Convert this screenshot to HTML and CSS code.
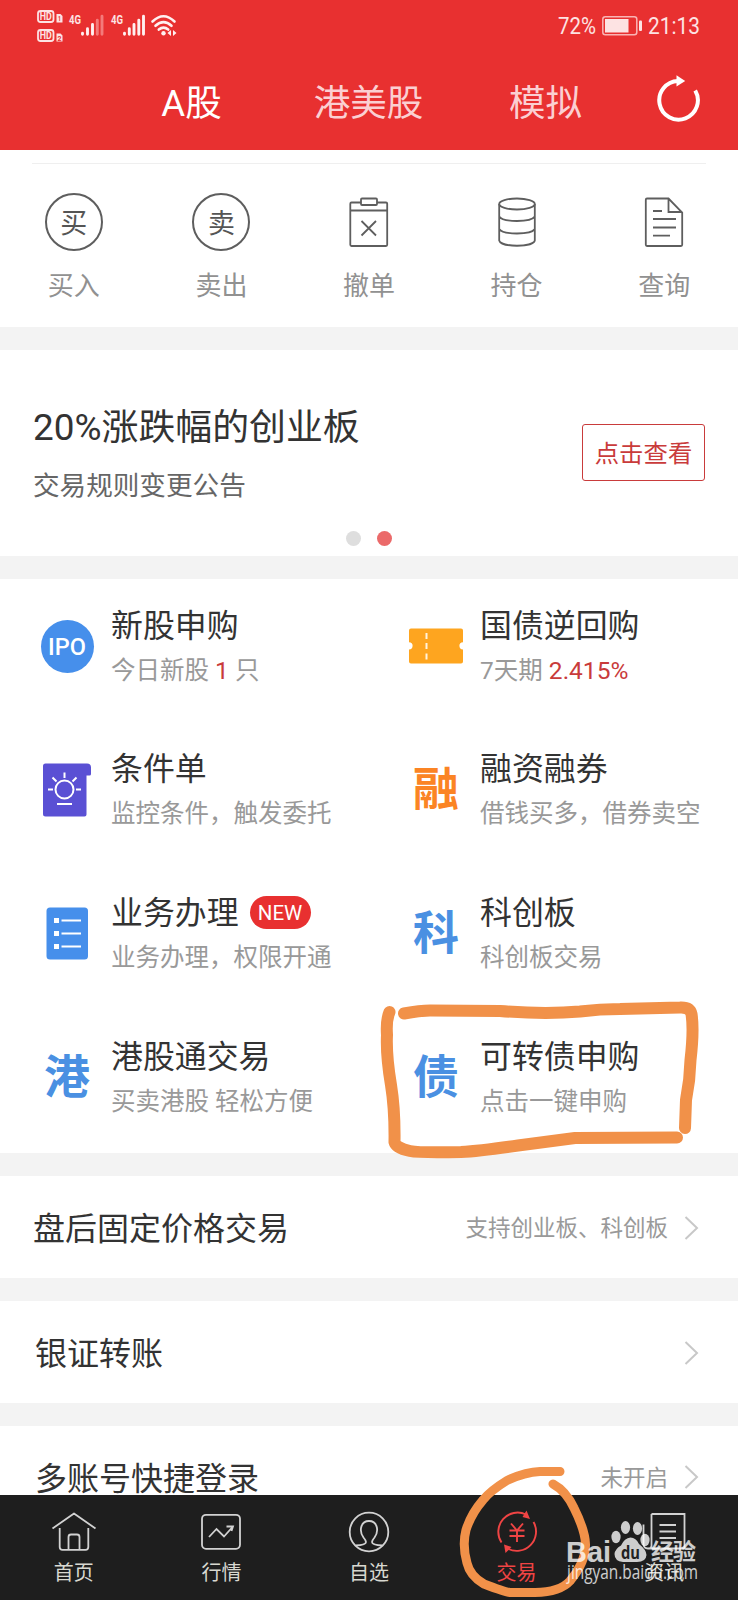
FILE: index.html
```html
<!DOCTYPE html>
<html lang="zh-CN">
<head>
<meta charset="utf-8">
<title>交易</title>
<link rel="stylesheet" href="styles.css">
</head>
<body>
<div class="screen">
  <header class="header">
    <div class="status">
      <svg class="status-left" width="146" height="44" viewBox="34 4 146 44">
        <g fill="none" stroke="#fde3e3" stroke-width="1.8">
          <rect x="38" y="11" width="15.500" height="11" rx="2.500"/>
          <rect x="38" y="30" width="15.500" height="11" rx="2.500"/>
        </g>
        <path d="M56.500 14h4l2 2v6.500h-6zM56.500 33.500h4l2 2v6h-6z" fill="#fde3e3"/>
        <g class="latin" fill="#fde3e3" font-weight="700">
          <text x="39.800" y="20.200" font-size="10.500" textLength="12" lengthAdjust="spacingAndGlyphs">HD</text>
          <text x="39.800" y="39.200" font-size="10.500" textLength="12" lengthAdjust="spacingAndGlyphs">HD</text>
          <text x="58" y="21.300" font-size="7.500" fill="#e83030" textLength="3" lengthAdjust="spacingAndGlyphs">1</text>
          <text x="57.500" y="40.600" font-size="7.500" fill="#e83030" textLength="4" lengthAdjust="spacingAndGlyphs">2</text>
          <text x="69" y="24.300" font-size="13.500" textLength="12" lengthAdjust="spacingAndGlyphs">4G</text>
          <text x="111" y="24.300" font-size="13.500" textLength="12" lengthAdjust="spacingAndGlyphs">4G</text>
        </g>
        <g fill="none" stroke="#fff0f0" stroke-width="2.900" stroke-linecap="round">
          <path d="M82.500 33.300v.9M87.500 28.800v5.400M92.500 24.500v9.700"/>
          <path d="M97.300 20.300v13.900M102 16.200v18" stroke="#f47a7a"/>
          <path d="M124.500 33.300v.9M129.300 28.800v5.400M134 24.500v9.700M138.800 20.300v13.900M143.500 16.200v18"/>
        </g>
        <g fill="none" stroke="#fff0f0" stroke-width="2.600" stroke-linecap="round">
          <path d="M152.500 21.500q11-10.500 22 0M155.500 25.800q8-7.500 16 0M158.800 29.600q4.700-4 9.400 0"/>
        </g>
        <circle cx="163.500" cy="33.200" r="2.200" fill="#fff0f0"/>
        <path d="M171 30v6l-3.500-3zM173 30v6l3.500-3z" fill="#fff0f0"/>
      </svg>
      <svg class="status-right" width="146" height="30" viewBox="556 12 146 30">
        <g class="latin" fill="#fde3e3" font-size="24">
          <text x="558" y="34.300" textLength="38" lengthAdjust="spacingAndGlyphs">72%</text>
          <text x="648" y="34.300" textLength="52" lengthAdjust="spacingAndGlyphs">21:13</text>
        </g>
        <rect x="602.800" y="16.800" width="34" height="18" rx="2.500" fill="none" stroke="#f9b4b4" stroke-width="1.500"/>
        <rect x="605" y="19" width="23.500" height="13.500" fill="#fde3e3"/>
        <rect x="639" y="20.500" width="3" height="10.500" rx="1" fill="#fde3e3"/>
      </svg>
    </div>
    <nav class="tabs">
      <a class="tab tab-on">A股</a>
      <a class="tab">港美股</a>
      <a class="tab">模拟</a>
      <span class="refresh">
        <svg width="48" height="50" viewBox="0 0 48 50">
          <path d="M43.200 16.500A19.300 19.300 0 1 1 26 7" fill="none" stroke="#fff" stroke-width="4"/>
          <path d="M24.500 1.200L33.200 7L24.500 12.500z" fill="#fff"/>
        </svg>
      </span>
    </nav>
  </header>

  <section class="actions">
    <div class="action">
      <span class="ring">买</span><span class="action-name">买入</span>
    </div>
    <div class="action">
      <span class="ring">卖</span><span class="action-name">卖出</span>
    </div>
    <div class="action">
      <svg width="58" height="58" viewBox="0 0 58 58" fill="none" stroke="#5e5e5e" stroke-width="1.800">
        <path d="M21 9.500H11.500Q10.300 9.500 10.300 10.700V51.800Q10.300 53 11.500 53H46Q47.200 53 47.200 51.800V10.700Q47.200 9.500 46 9.500H37M10.300 17.500H47.200"/>
        <rect x="21" y="5.500" width="16" height="6.500" rx="1"/>
        <path d="M21.500 28L36 42.500M36 28L21.500 42.500"/>
      </svg>
      <span class="action-name">撤单</span>
    </div>
    <div class="action">
      <svg width="58" height="58" viewBox="0 0 58 58" fill="none" stroke="#5e5e5e" stroke-width="1.800">
        <ellipse cx="29" cy="11" rx="17.800" ry="5.500"/>
        <path d="M11.200 11V47.500C13 54.500 45 54.500 46.800 47.500V11M11.200 23.500C15 29.500 43 29.500 46.800 23.500M11.200 36C15 42 43 42 46.800 36"/>
      </svg>
      <span class="action-name">持仓</span>
    </div>
    <div class="action">
      <svg width="58" height="58" viewBox="0 0 58 58" fill="none" stroke="#5e5e5e" stroke-width="1.800">
        <path d="M33.500 5.500H12Q10.800 5.500 10.800 6.700V51.800Q10.800 53 12 53H46Q47.200 53 47.200 51.800V19.500zM33.500 5.500V19H47.200M18 18H27M18 26H41M18 34.500H41M18 42.700H35"/>
      </svg>
      <span class="action-name">查询</span>
    </div>
  </section>

  <section class="banner">
    <div class="banner-row">
      <div>
        <h2 class="banner-title">20%涨跌幅的创业板</h2>
        <p class="banner-sub">交易规则变更公告</p>
      </div>
      <button class="banner-btn">点击查看</button>
    </div>
    <div class="dots"><i class="dot"></i><i class="dot dot-on"></i></div>
  </section>

  <section class="menu">
    <div class="item">
      <div class="icon"><span class="ipo">IPO</span></div>
      <div><h3>新股申购</h3><p>今日新股 <b>1</b> 只</p></div>
    </div>
    <div class="item">
      <div class="icon">
        <svg width="54" height="54" viewBox="0 0 54 54">
          <path d="M2 9.500H52Q54 9.500 54 11.500V23.200A3.600 3.600 0 0 0 54 30.400V42.500Q54 44.500 52 44.500H2Q0 44.500 0 42.500V30.400A3.600 3.600 0 0 0 0 23.200V11.500Q0 9.500 2 9.500z" fill="#fea51f"/>
          <path d="M17.500 14v6M17.500 24v6M17.500 34.500v6" stroke="#fff4dd" stroke-width="2"/>
        </svg>
      </div>
      <div><h3>国债逆回购</h3><p>7天期 <b>2.415%</b></p></div>
    </div>
    <div class="item">
      <div class="icon">
        <svg width="54" height="54" viewBox="0 0 54 54">
          <path d="M5.500 .500H47Q51 .500 51 4.500V11Q51 12.500 49.500 12.500H46.500V51.500Q46.500 53.500 44.500 53.500H5.500Q3 53.500 3 51V3Q3 .500 5.500 .500z" fill="#5a50d4"/>
          <g fill="none" stroke="#fff" stroke-width="2">
            <circle cx="24.500" cy="26.500" r="9"/>
            <path d="M24.500 9.500V15M8 26.500H13M36 26.500H41M12.500 14.500L16.500 18.500M36.500 14.500L32.500 18.500M17 41H32"/>
          </g>
        </svg>
      </div>
      <div><h3>条件单</h3><p>监控条件，触发委托</p></div>
    </div>
    <div class="item">
      <div class="icon"><span class="glyph glyph-orange">融</span></div>
      <div><h3>融资融券</h3><p>借钱买多，借券卖空</p></div>
    </div>
    <div class="item">
      <div class="icon">
        <svg width="54" height="54" viewBox="0 0 54 54">
          <rect x="6.500" y="1.500" width="41.500" height="52" rx="3.500" fill="#468feb"/>
          <path d="M14 12h5v5h-5zM14 25h5v5h-5zM14 38h5v5h-5z" fill="#fff"/>
          <path d="M21.500 14.500h19.500M21.500 27.500h19.500M21.500 40.500h19.500" stroke="#fff" stroke-width="2"/>
        </svg>
      </div>
      <div><h3>业务办理<span class="new">NEW</span></h3><p>业务办理，权限开通</p></div>
    </div>
    <div class="item">
      <div class="icon"><span class="glyph">科</span></div>
      <div><h3>科创板</h3><p>科创板交易</p></div>
    </div>
    <div class="item">
      <div class="icon"><span class="glyph">港</span></div>
      <div><h3>港股通交易</h3><p>买卖港股 轻松方便</p></div>
    </div>
    <div class="item">
      <div class="icon"><span class="glyph">债</span></div>
      <div><h3>可转债申购</h3><p>点击一键申购</p></div>
    </div>
  </section>

  <section class="row">
    <span class="row-name row-name-first">盘后固定价格交易</span><span class="row-note">支持创业板、科创板</span>
    <svg width="16" height="26" viewBox="0 0 16 26"><path d="M2.500 2L14 13L2.500 24" fill="none" stroke="#c8c8c8" stroke-width="2"/></svg>
  </section>
  <section class="row">
    <span class="row-name">银证转账</span><span class="row-note"></span>
    <svg width="16" height="26" viewBox="0 0 16 26"><path d="M2.500 2L14 13L2.500 24" fill="none" stroke="#c8c8c8" stroke-width="2"/></svg>
  </section>
  <section class="row row-cut">
    <span class="row-name">多账号快捷登录</span><span class="row-note">未开启</span>
    <svg width="16" height="26" viewBox="0 0 16 26"><path d="M2.500 2L14 13L2.500 24" fill="none" stroke="#c8c8c8" stroke-width="2"/></svg>
  </section>

  <nav class="bottom">
    <a class="nav">
      <svg width="46" height="44" viewBox="0 0 46 44" fill="none" stroke="#d2d2d2" stroke-width="1.800" stroke-linejoin="round">
        <path d="M1.500 18.500L23 3.500L44.500 18.500M8.700 18V37Q8.700 39.800 11.500 39.800H34.500Q37.300 39.800 37.300 37V18M17.500 39.800V27Q17.500 24.500 20 24.500H26Q28.500 24.500 28.500 27V39.800"/>
      </svg><span>首页</span>
    </a>
    <a class="nav">
      <svg width="46" height="44" viewBox="0 0 46 44" fill="none" stroke="#d2d2d2" stroke-width="1.800">
        <rect x="4" y="4.800" width="38" height="34" rx="4"/>
        <path d="M11 27L18.500 19L26 26.500L34.500 17M28.500 16.500H35L33.500 21"/>
      </svg><span>行情</span>
    </a>
    <a class="nav">
      <svg width="46" height="44" viewBox="0 0 46 44" fill="none" stroke="#d2d2d2" stroke-width="1.800">
        <circle cx="23" cy="22" r="19.300"/>
        <path d="M9.500 35.500Q20 35 20 32Q20 30.500 17.500 27.500C12.500 20.500 15 11 23 11S33.500 20.500 28.500 27.500Q26 30.500 26 32Q26 35 36.500 35.500"/>
      </svg><span>自选</span>
    </a>
    <a class="nav nav-on">
      <svg width="46" height="44" viewBox="0 0 46 44" fill="none" stroke="#f04444" stroke-width="1.900">
        <path d="M7.500 32.500A19.300 19.300 0 0 1 32 4.500M39.500 12A19.300 19.300 0 0 1 13.500 38.500"/>
        <path d="M32.500 .500L36 9L28.500 7zM10 34.500L17.500 37L11.500 43z" fill="#f04444" stroke="none"/>
        <path d="M17 13.500L23 20.500L29 13.500M23 20.500V32M15.500 20.500H30.500M15.500 26H30.500"/>
      </svg><span>交易</span>
    </a>
    <a class="nav">
      <svg width="46" height="44" viewBox="0 0 46 44" fill="none" stroke="#d2d2d2" stroke-width="1.800">
        <path d="M10.500 4H43.500V38.500H7Q2.500 38.500 2.500 34V14.500M10.500 4V36Q10.500 38.500 7 38.500M18.500 15H35M18.500 21.500H35M18.500 28H35"/>
      </svg><span>资讯</span>
    </a>
  </nav>

  <svg class="overlay" width="738" height="1600" viewBox="0 0 738 1600">
    <g fill="none" stroke="#f19149" stroke-linecap="round" stroke-linejoin="round">
      <path stroke-width="12" d="M404 1013.500C412 1012 420 1010.500 430 1010.500L500 1011Q545 1014.500 580 1011.500Q600 1009 620 1009L680 1007.500Q690 1007 691.500 1014Q694 1030 690.500 1060Q690 1080 686 1100L685 1128"/>
      <path stroke-width="12" d="M389.500 1012Q386 1020 387 1035Q386 1055 391 1085Q395 1110 394.500 1142Q396 1148 410 1151Q420 1153 461 1152Q480 1151 518 1145.500Q560 1140 575 1138L677 1137.500"/>
      <path stroke-width="9" d="M560 1471.500H540Q525 1472 507 1480.500Q490 1491 483 1500Q471 1514 466 1530Q462 1545 467 1563Q470 1576 484 1584Q505 1592 510 1592.500H535Q560 1592 570 1581Q586 1562 585.500 1544Q585 1530 574 1508Q566 1491 553 1484"/>
    </g>
    <g fill="#fff" opacity=".78">
      <g class="mark">
        <text class="mark-name" x="566" y="1561.500" font-size="30" font-weight="700" textLength="45" lengthAdjust="spacingAndGlyphs">Bai</text>
        <text x="651" y="1560" font-size="23" font-weight="700" textLength="45">经验</text>
        <text x="567" y="1579" font-size="20" textLength="131" lengthAdjust="spacingAndGlyphs">jingyan.baidu.com</text>
      </g>
      <ellipse cx="616" cy="1537" rx="4.600" ry="6.200"/>
      <ellipse cx="625.500" cy="1527.500" rx="4.600" ry="6.500"/>
      <ellipse cx="637.500" cy="1528.500" rx="4.600" ry="6.500"/>
      <ellipse cx="645" cy="1540" rx="4.600" ry="6.200"/>
      <path d="M630.500 1537.500Q636 1537.500 639 1544Q646.500 1550 646.500 1555Q646 1562 637 1562H623Q614.500 1561 614.500 1554Q615 1549 621 1545.500Q624.500 1538 630.500 1537.500z"/>
    </g>
    <text class="mark" x="621" y="1559" font-size="18" font-weight="700" fill="#222" textLength="19" lengthAdjust="spacingAndGlyphs">du</text>
  </svg>
</div>
</body>
</html>
```

FILE: styles.css
```css
* { box-sizing: border-box; }
body { margin: 0; background: #f3f3f3; }
h2, h3, p { margin: 0; font-weight: 400; }

.screen {
  position: relative;
  width: 738px;
  height: 1600px;
  overflow: hidden;
  display: flex;
  flex-direction: column;
  background: #f3f3f3;
  color: #333;
  font-family: Roboto, "Noto Sans CJK SC", sans-serif;
}
.latin { font-family: Roboto, sans-serif; }
.mark { font-family: "Open Sans", "Noto Sans CJK SC", sans-serif; }
.mark-name { font-family: "Liberation Sans", sans-serif; }

.header { flex: none; height: 150px; background: #e83030; }
.status { display: flex; justify-content: space-between; height: 56px; padding: 4px 36px 0 34px; }
.status svg { overflow: visible; }
.status-right { margin-top: 8px; }
.tabs { display: grid; grid-template-columns: 177px 177px 177px 84px; height: 94px; padding-left: 103px; }
.tab { text-align: center; font-size: 36.600px; line-height: 96px; color: #fbcfd2; }
.tab-on { color: #fff; }
.refresh { display: flex; justify-content: center; padding-top: 18px; }

.actions {
  flex: none;
  display: grid;
  grid-template-columns: repeat(5, 1fr);
  height: 177px;
  padding-top: 43px;
  margin-bottom: 23px;
  background: linear-gradient(#efefef, #efefef) 32px 13px / 674px 1px no-repeat #fff;
}
.action { display: flex; flex-direction: column; align-items: center; }
.ring {
  width: 58px;
  height: 58px;
  border: 2px solid #5e5e5e;
  border-radius: 50%;
  text-align: center;
  font-size: 27px;
  line-height: 58px;
  color: #555;
}
.action-name { margin-top: 14px; font-size: 26px; line-height: 42px; color: #919191; }

.banner { flex: none; height: 205.500px; padding: 52px 33px 0; margin-bottom: 23px; background: #fff; }
.banner-row { display: flex; justify-content: space-between; height: 129px; }
.banner-title { font-size: 36.900px; line-height: 52px; }
.banner-sub { margin-top: 12px; font-size: 26.600px; line-height: 40px; color: #666; }
.banner-btn {
  width: 123px;
  height: 57px;
  margin-top: 22px;
  padding: 0;
  border: 1.500px solid #c93b3b;
  border-radius: 3px;
  background: #fff;
  color: #c93b3b;
  font: 24.400px/57px Roboto, "Noto Sans CJK SC", sans-serif;
}
.dots { display: flex; justify-content: center; gap: 16px; }
.dot { width: 15px; height: 15px; border-radius: 50%; background: #dedede; }
.dot-on { background: #eb6a6a; }

.menu {
  flex: none;
  display: grid;
  grid-template-columns: 369px 369px;
  grid-auto-rows: 143.700px;
  height: 574.500px;
  padding-top: 22px;
  margin-bottom: 22.500px;
  background: #fff;
}
.item { display: flex; gap: 17px; padding-left: 40px; }
.icon { display: flex; align-items: center; justify-content: center; width: 54px; height: 54px; margin-top: 18.500px; }
.ipo {
  width: 53px;
  height: 53px;
  border-radius: 50%;
  background: #468feb;
  color: #fff;
  text-align: center;
  font-size: 23.500px;
  font-weight: 500;
  line-height: 54px;
}
.glyph { font-size: 46px; font-weight: 700; line-height: 55px; color: #4a90e2; }
.glyph-orange { color: #fb8424; }
.item h3 { display: flex; align-items: center; height: 50px; font-size: 31.900px; line-height: 52px; white-space: nowrap; }
.item p { font-size: 24.500px; line-height: 39px; color: #999; white-space: nowrap; }
.item b { font-weight: 400; color: #c93b3b; }
.new {
  width: 61px;
  height: 33px;
  margin-left: 11px;
  border-radius: 17px;
  background: #e83030;
  color: #fff;
  text-align: center;
  font-size: 20.500px;
  line-height: 34px;
}

.row {
  flex: none;
  display: flex;
  align-items: center;
  height: 102.500px;
  padding: 4px 39px 0 35px;
  margin-bottom: 22.500px;
  background: #fff;
}
.row-cut { height: 69.500px; margin: 0; padding-top: 0; overflow: hidden; align-items: flex-start; }
.row-name { flex: 1; font-size: 32px; line-height: 106px; }
.row-name-first { margin-left: -2px; }
.row-note { margin-right: 15px; font-size: 22.500px; line-height: 105px; color: #999; }
.row svg { flex: none; margin-top: -2px; }
.row-cut svg { margin-top: 38px; }

.bottom {
  flex: none;
  display: grid;
  grid-template-columns: repeat(5, 1fr);
  height: 105px;
  padding-top: 15px;
  background: #1e1e1e;
}
.nav { display: flex; flex-direction: column; align-items: center; color: #d8d8d0; font-size: 20px; line-height: 30px; }
.nav span { margin-top: 4px; }
.nav-on { color: #f04444; }

.overlay { position: absolute; left: 0; top: 0; }
```
